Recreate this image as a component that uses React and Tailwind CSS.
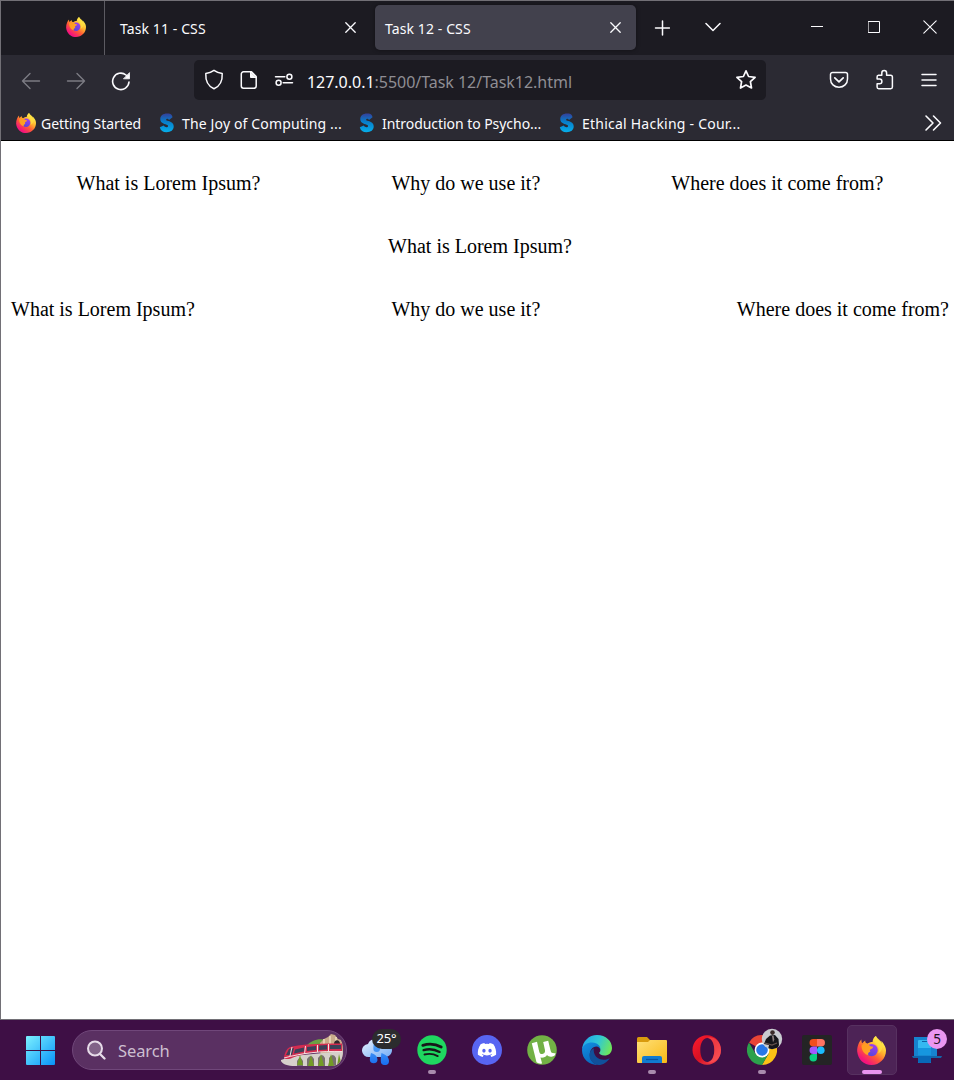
import React from "react";
import { FaDiscord } from "react-icons/fa";

const Svg = ({ w = 20, h, className = "", children, box }) => (
  <svg
    width={w}
    height={h || w}
    viewBox={box || `0 0 ${w} ${h || w}`}
    className={`shrink-0 ${className}`}
    fill="none"
    stroke="#fbfbfe"
    strokeWidth="1.5"
    strokeLinecap="round"
    strokeLinejoin="round"
  >
    {children}
  </svg>
);

function Firefox({ size, id, className = "" }) {
  return (
    <svg width={size} height={size} viewBox="0 0 30 30" className={`shrink-0 ${className}`}>
      <defs>
        <linearGradient id={`${id}a`} x1="0.85" y1="0.1" x2="0.2" y2="0.95">
          <stop offset="0.05" stopColor="#fff44f" />
          <stop offset="0.35" stopColor="#ffb32c" />
          <stop offset="0.6" stopColor="#ff5a36" />
          <stop offset="0.9" stopColor="#f4147c" />
        </linearGradient>
        <linearGradient id={`${id}b`} x1="0.8" y1="0" x2="0.3" y2="1">
          <stop offset="0" stopColor="#a33df0" />
          <stop offset="1" stopColor="#5547d8" />
        </linearGradient>
        <linearGradient id={`${id}c`} x1="0" y1="0" x2="1" y2="1">
          <stop offset="0" stopColor="#ff9a20" />
          <stop offset="1" stopColor="#ffa425" />
        </linearGradient>
      </defs>
      <path d="M28 9c-.8-1.800-2-3-3-3.700.6 1.200.9 2.200 1 3C24.500 4.700 21.300 4 19.500 0c-2.500 1.600-3.300 4.300-3.400 6.100-2 0-4 .7-5.400 1.800C8.500 7.300 8.400 5.400 8.600 4.600 7.200 5.300 6 6.800 5.400 7.500 4.600 6.500 4.500 4.500 4.600 3.600 2.500 5.300 0 10.300.2 16 1 24 7 30 15 30c8.300 0 15-6.500 15-15 0-2.200-.9-4.500-2-6z" fill={`url(#${id}a)`} />
      <path d="M19.500 0c-2.200 2-2.300 5.500 0 8 3 2.800 4 6 2.500 10 4-2 5.500-7 3.500-11.500C24 4 21 3 19.500 0z" fill="#ffdf42" opacity=".75" />
      <circle cx="15.200" cy="14.600" r="6.300" fill={`url(#${id}b)`} />
      <path d="M4.600 10c1.600-2.300 4.100-2.600 6.100-2.100 1.200.3 2.100 1.300 2.500 2.300.8.900 3.500.6 3.500 1.200-.2 1.600-2.600 2-3.200 2.700-.4.800-.1 1.600.6 2.300-1.800 0-3.200 1.400-2.400 3.300C8 19.200 5 15.500 4.600 10z" fill={`url(#${id}c)`} />
    </svg>
  );
}

function Bookmark({ label, className }) {
  return (
    <div className={`flex h-full shrink-0 items-center ${className}`}>
      <svg width="16" height="20" viewBox="0 0 16 20" className="mt-px shrink-0">
        <defs>
          <linearGradient id="swayam" x1="0" y1="0" x2="0" y2="1">
            <stop offset="0" stopColor="#34409b" />
            <stop offset=".4" stopColor="#087bc8" />
            <stop offset="1" stopColor="#06aeea" />
          </linearGradient>
        </defs>
        <path d="M13.500 4.300C13 1 10.500.600 8 .600 4 .600 1.300 2.800 1.300 6c0 3.300 2.400 4.400 5.200 5.300 1.900.6 2.600 1 2.500 1.900-.2 1.500-3 1.500-4.300-.6L.800 14.200C1.500 17.500 4 19.200 7.500 19.200c4.300 0 7.200-2.200 7.200-5.700 0-3.400-2.600-4.600-5.300-5.500C7.800 7.500 7 7.100 7.100 6.400c.2-1.200 2.200-1 2.900.6z" fill="url(#swayam)" />
      </svg>
      <span className="mt-[2px] ml-[7px] whitespace-nowrap">{label}</span>
    </div>
  );
}

function TabBar() {
  return (
    <div className="flex h-[54px] shrink-0 items-center bg-[#1c1b22] text-[14px] tracking-[0.1px]">
      <div className="flex h-full w-[104px] shrink-0 items-center border-r border-[#5c5b62] pl-[65px]">
        <Firefox size={20} id="pin" className="-mt-[2px]" />
      </div>
      <div className="flex h-full w-[270px] shrink-0 items-center justify-between pr-[19px] pl-[15px]">
        <span>Task 11 - CSS</span>
        <Svg w={11} className="-mt-px"><path d="M.8.8l9.400 9.400M10.200.8.800 10.200" strokeWidth="1.300" /></Svg>
      </div>
      <div className="mb-px flex h-[45px] w-[261px] shrink-0 items-center justify-between rounded-[5px] bg-[#42414d] pr-[15px] pl-[10px] shadow-[0_0_4px_rgba(0,0,0,0.4)]">
        <span className="mt-px">Task 12 - CSS</span>
        <Svg w={11}><path d="M.8.8l9.400 9.400M10.200.8.800 10.200" strokeWidth="1.300" /></Svg>
      </div>
      <Svg w={16} className="ml-[18px]"><path d="M8.500 1v14M1.500 8h14" /></Svg>
      <Svg w={16} className="-mt-[2px] ml-[35px]"><path d="M1 4.500l7 7 7-7" /></Svg>
      <Svg w={12} className="-mt-[4px] ml-[90px]"><path d="M0 6.500h12" strokeWidth="1" strokeLinecap="butt" /></Svg>
      <Svg w={12} className="-mt-[2px] ml-[45px]"><path d="M.5.5h11v11H.5z" strokeWidth="1" strokeLinejoin="miter" /></Svg>
      <Svg w={14} className="-mt-[2px] ml-[43px]"><path d="M.8.8l12.400 12.400M13.200.8.800 13.200" strokeWidth="1.100" /></Svg>
    </div>
  );
}

function NavBar() {
  return (
    <div className="flex h-[50px] shrink-0 items-center">
      <Svg w={20} className="mt-px ml-[20px]"><path d="M18.500 10h-17M9 2.500 1.500 10 9 17.500" stroke="#7c7b83" strokeWidth="1.400" /></Svg>
      <Svg w={20} className="mt-px ml-[25px]"><path d="M1.500 10h17M11 2.500l7.500 7.500-7.500 7.500" stroke="#7c7b83" strokeWidth="1.400" /></Svg>
      <Svg w={20} className="mt-[2px] ml-[25px]">
        <path d="M18 11A8.200 8.200 0 1 1 15 4l2 2" strokeWidth="1.600" />
        <path d="M18.500 2v5.800h-5.700z" fill="#fbfbfe" strokeWidth=".8" />
      </Svg>
      <div className="ml-[63px] flex h-[40px] w-[572px] shrink-0 items-center rounded-[5px] bg-[#1c1b22]">
        <Svg w={20} h={22} className="ml-[10px]"><path d="M10 1.300c2.500 1.700 5 2.700 8.200 3.300.4 7-2.200 12.500-8.200 15.200C4 17.100 1.400 11.600 1.800 4.600 5 4 7.500 3 10 1.300z" strokeWidth="1.500" /></Svg>
        <Svg w={18} h={20} className="ml-[16px]">
          <path d="M3.500 1.800h8l4.700 4.700V16a2.200 2.200 0 0 1-2.200 2.200H3.500A2.200 2.200 0 0 1 1.300 16V4a2.200 2.200 0 0 1 2.200-2.200z" />
          <path d="M10.500 2v5.500H16z" fill="#fbfbfe" strokeWidth="1" />
        </Svg>
        <Svg w={20} h={14} className="ml-[16px]">
          <path d="M1.500 3.800h9.300M9.200 9.800h9.300" />
          <circle cx="15.400" cy="3.800" r="2.500" /><circle cx="4.600" cy="9.800" r="2.500" />
        </Svg>
        <span className="mt-[3px] ml-[13px] w-[428px] text-[16px] tracking-[-0.03px] whitespace-nowrap text-[#8f8e94]">
          <span className="text-[#fbfbfe]">127.0.0.1</span>:5500/Task 12/Task12.html
        </span>
        <Svg w={22}><path d="M11 1.800l2.600 5.700 6.500.8-4.700 4.300 1.100 6.400-5.500-3-5.500 3 1.100-6.400L1.900 8.300l6.500-.8z" strokeWidth="1.700" /></Svg>
      </div>
      <Svg w={20} className="ml-[63px]">
        <path d="M3.500 2.500h13a2 2 0 0 1 2 2V9c0 4.800-3.700 8.200-8.500 8.200S1.500 13.800 1.500 9V4.500a2 2 0 0 1 2-2z" />
        <path d="M5.800 7.800 10 11.900l4.200-4.100" strokeWidth="1.700" />
      </Svg>
      <Svg w={20} h={22} className="ml-[26px]">
        <path d="M3.500 6.300h3.300V3.900a2.400 2.400 0 0 1 4.800 0v2.400h4a1.800 1.800 0 0 1 1.800 1.800v10a1.600 1.600 0 0 1-1.600 1.600H3.700a1.600 1.600 0 0 1-1.600-1.600v-3.400h2.500a2.300 2.300 0 0 0 0-4.600H2.100V8a1.600 1.600 0 0 1 1.400-1.700z" />
      </Svg>
      <Svg w={18} h={14} className="-mt-px ml-[25px]"><path d="M2 1.500h14M2 7h14M2 12.500h14" /></Svg>
    </div>
  );
}

function BrowserPage() {
  return (
    <main className="flex flex-1 flex-col border-t border-black bg-white px-[5px] pt-[26px] font-['Liberation_Serif',serif] text-[20px] leading-[33px] text-black">
      <div className="flex justify-around pl-[5px]">
        <span>What is Lorem Ipsum?</span>
        <span>Why do we use it?</span>
        <span>Where does it come from?</span>
      </div>
      <div className="mt-[30px] flex justify-center pl-[5px]"><span>What is Lorem Ipsum?</span></div>
      <div className="mt-[30px] flex justify-between pl-[5px]">
        <span>What is Lorem Ipsum?</span>
        <span>Why do we use it?</span>
        <span>Where does it come from?</span>
      </div>
    </main>
  );
}

function Slot({ children, dot }) {
  return (
    <div className="relative flex h-full w-[55px] shrink-0 items-center justify-center">
      {children}
      {dot && <span className="absolute bottom-[6px] left-[24px] h-[4px] w-[8px] rounded-full bg-[#a98bad]" />}
    </div>
  );
}

const App30 = ({ children }) => (
  <svg width="30" height="30" viewBox="0 0 30 30" className="shrink-0">{children}</svg>
);

function Train() {
  return (
    <svg width="62" height="34" viewBox="0 0 62 34">
      <defs><clipPath id="train"><path d="M0 0h50c8 0 12 7 12 17s-4 16-12 16H14C7 33 1 31 0 28z" /></clipPath></defs>
      <g clipPath="url(#train)">
        <path d="M25 13c6-6 12-8 21-6v8z" fill="#6ba144" />
        <path d="M39 10l4-4 4-2 3-3 4 1 3 4 3 1 2 4v21H40z" fill="#c9ac8b" />
        <path d="M43 6v7M49 3v9M55 4v7" stroke="#e4d0b2" strokeWidth="2" />
        <path d="M53 11c0-5 6-5 6 0v4h-6z" fill="#30272c" />
        <path d="M0 27l12-4 50-5v15H0z" fill="#d6d0cb" />
        <path d="M16 33v-5q3-6 6 0v5zM26 33v-7q4-6 7 0v7zM37 33v-8q4-6 7 0v8zM48 33v-8q4-6 7 0v8z" fill="#78716f" />
        <path d="M19 22l-3 10h6zM30 22l-3 11h6zM40 21l-3 12h6zM50 21l-3 12h6zM58 21l-2 12h5z" fill="#739b27" />
        <path d="M3 24.500c1-6 3-10 8-11 16-3 32-3 50-3v7.500c-20 0-36 1.500-49 6.500-4 2-8 2-9 0z" fill="#d32c50" />
        <path d="M5 22l3-6 5-1-2 7zM14 16.500l9-2v4l-10 2zM26 14l9-1v4l-9 1zM38 12.500l8-.5v4.500l-8 .5zM49 12h11v4H49z" fill="#3c4058" />
        <path d="M3 25c18-5 37-7 58-6.500" stroke="#f3dfe0" fill="none" />
        <path d="M11 14l-2 9M24.500 13l-1 8M36.500 12v7M47.500 11v7" stroke="#f2e4e4" strokeWidth="1" />
      </g>
    </svg>
  );
}

function Taskbar() {
  return (
    <footer className="flex h-[60px] shrink-0 items-center bg-[#3e0f45] font-['Noto_Sans',sans-serif]">
      <svg width="30" height="30" viewBox="0 0 30 30" className="ml-[25px] shrink-0">
        <defs><linearGradient id="win" gradientUnits="userSpaceOnUse" x1="0" y1="0" x2="30" y2="30"><stop stopColor="#80f4ff" /><stop offset="1" stopColor="#0893f8" /></linearGradient></defs>
        <path d="M2 1h13v14H1V2a1 1 0 0 1 1-1zM16 1h13a1 1 0 0 1 1 1v13H16zM1 16h14v14H2a1 1 0 0 1-1-1zM16 16h14v13a1 1 0 0 1-1 1H16z" fill="url(#win)" />
      </svg>
      <div className="ml-[17px] flex h-[40px] w-[275px] shrink-0 items-center rounded-full border border-[#70477a] bg-[#5a3062] pr-[3px]">
        <Svg w={20} className="ml-[13px]"><circle cx="9" cy="8.500" r="7" stroke="#e7dce9" strokeWidth="2" fill="#816288" /><path d="M14 14l4.500 4.500" stroke="#e7dce9" strokeWidth="2.300" /></Svg>
        <span className="mt-[2px] ml-[12px] flex-1 text-[16.500px] tracking-[-0.1px] text-[#cdbfd0]">Search</span>
        <Train />
      </div>
      <div className="ml-[2px] flex h-full shrink-0">
        <Slot>
          <svg width="30" height="30" viewBox="0 0 30 30">
            <defs><linearGradient id="cloud" x1="0" y1="0" x2="1" y2="1"><stop stopColor="#e8f2ff" /><stop offset="1" stopColor="#75adf5" /></linearGradient><linearGradient id="drop" x1="0" y1="0" x2="0" y2="1"><stop stopColor="#58a9fa" /><stop offset="1" stopColor="#176df0" /></linearGradient></defs>
            <path d="M7 22a6.500 6.500 0 0 1-1-13C8 3 17 2 20 8c6-1 10 2 10 7 0 4-3 7-7 7z" fill="url(#cloud)" />
            <path d="M9 18c4 1 6.500 3.500 6.500 7a3.900 3.900 0 0 1-7.700 0c0-2 .5-4 1.200-7zM19.500 18c4.500 1.500 7.500 4.500 7.500 8a4.100 4.100 0 0 1-8.200 0c0-2.500 0-4.500.7-8zM12 7c3.500 1 6 3.500 6 6.700a3.300 3.300 0 0 1-6.600 0c0-2 0-4 .6-6.700z" fill="url(#drop)" />
          </svg>
          <span className="absolute top-[9px] left-[23px] flex h-[20px] w-[29px] items-center justify-center rounded-full bg-[#2c2c2e] text-[13px] tracking-[-0.2px] text-white">25°</span>
        </Slot>
        <Slot dot>
          <App30><circle cx="15" cy="15" r="14.700" fill="#1fd760" /><g stroke="#171719" fill="none" strokeLinecap="round"><path d="M5.800 10.300c6-1.800 13-1.200 18.400 1.700" strokeWidth="2.800" /><path d="M6.600 15.100c5.500-1.600 11-.9 16 1.800" strokeWidth="2.300" /><path d="M7.500 19.500c4.700-1.200 9.200-.7 13.200 1.600" strokeWidth="1.900" /></g></App30>
        </Slot>
        <Slot>
          <span className="flex h-[30px] w-[30px] items-center justify-center rounded-full bg-[#5865f2]"><FaDiscord size={20} color="white" /></span>
        </Slot>
        <Slot>
          <App30>
            <circle cx="15" cy="15" r="14.800" fill="#72b145" />
            <path d="M4.800 8.300l5.200-1.600 2.200 9.800c.6 2.300 2 3 3.800 2.300 1.800-.8 2.400-2 1.900-4.100L16.200 7l5-1.200 2.500 10.300c.4 1.700 1.600 2.500 4.900 2.200-.4 2-1.400 3.200-4.100 3.400-2 .2-3.400-.5-4.500-1.700-1.200 2-3.600 3-6.500 2.600l1.600 6c-2.200.3-4.200-.2-5.600-1.300z" fill="#fff" />
          </App30>
        </Slot>
        <Slot>
          <App30>
            <defs>
              <linearGradient id="edgeA" x1="0" y1=".3" x2="1" y2=".6"><stop stopColor="#22a6e8" /><stop offset=".5" stopColor="#30c7d6" /><stop offset="1" stopColor="#70e858" /></linearGradient>
              <linearGradient id="edgeB" x1="0" y1="0" x2=".5" y2="1"><stop stopColor="#1390e2" /><stop offset="1" stopColor="#0866bc" /></linearGradient>
            </defs>
            <path d="M0 15C.5 6 7 0 15 0c9 0 15 6 15 13 0 5-3.500 7.500-7.500 7.500-3.500 0-5.300-1.400-5.300-2.400 0-.6 1.200-1.200 1.200-3 0-3-3-6-8-6C5 9.100 1 11.500 0 15z" fill="url(#edgeA)" />
            <path d="M0 15c.5-5 5-7.500 10-7.500 6 0 8.800 4 8.400 7.500-.4-2-2-3.500-4-3.500-4 0-7 4-6.500 9.500.4 4.500 3.800 8 8.600 9C7 30 0 24 0 15z" fill="url(#edgeB)" />
            <path d="M11.800 13.300c-1 7 4 11.500 10 11.500 2.500 0 4.500-1 6-1.900C25.500 27 21 30 16.500 30 11 29 7.500 25 7.500 20.500c0-3.500 1.800-6 4.300-7.200z" fill="#10519b" />
          </App30>
        </Slot>
        <Slot dot>
          <App30>
            <defs><linearGradient id="folder" x1="0" y1="0" x2="1" y2="1"><stop stopColor="#ffe078" /><stop offset="1" stopColor="#f8b915" /></linearGradient></defs>
            <path d="M0 3.500A1.500 1.500 0 0 1 1.500 2H10l3 3h15v10H0z" fill="#d99b0d" />
            <path d="M0 7h11l2-2h16a1 1 0 0 1 1 1v21a1 1 0 0 1-1 1H1a1 1 0 0 1-1-1z" fill="url(#folder)" />
            <path d="M5 28v-5a2 2 0 0 1 2-2h16a2 2 0 0 1 2 2v5z" fill="#117bd0" /><path d="M9 24.500h12" stroke="#0754a2" strokeWidth="1.200" />
          </App30>
        </Slot>
        <Slot>
          <App30>
            <defs><linearGradient id="opera" x1="0" y1="0" x2="1" y2="1"><stop stopColor="#ff1b2d" /><stop offset=".5" stopColor="#d51124" /><stop offset="1" stopColor="#ff5053" /></linearGradient></defs>
            <path fillRule="evenodd" d="M15 .3c8 0 14 6.500 14 14.700s-6 14.700-14 14.700S.5 23 .5 15 7 .3 15 .3zM15.500 3C11 3 8.300 8 8.300 15s2.700 12 7.200 12c4 0 6.800-5 6.800-12S19.500 3 15.500 3z" fill="url(#opera)" />
            <path d="M15.500 3c4-2.500 13.500 2 13.500 12s-9.500 14.500-13.500 12c4 0 6.800-5 6.800-12S19.500 3 15.500 3z" fill="#ff5b5c" opacity=".55" />
          </App30>
        </Slot>
        <Slot dot>
          <App30>
            <path d="M15 15 2 7.500a15 15 0 0 1 26 0z" fill="#e84436" />
            <path d="M15 7.500h13A15 15 0 0 1 15 30l6.500-11.300z" fill="#fbc116" />
            <path d="M2 7.500A15 15 0 0 0 15 30l6.500-11.300H8.500z" fill="#2ca14c" />
            <circle cx="15" cy="15" r="7.400" fill="#fff" /><circle cx="15" cy="15" r="5.800" fill="#2878e8" />
          </App30>
          <svg width="22" height="22" viewBox="0 0 22 22" className="absolute top-[8px] left-[27px]">
            <defs><clipPath id="avatar"><circle cx="11" cy="11" r="10.200" /></clipPath></defs>
            <g clipPath="url(#avatar)"><path d="M0 0h22v22H0z" fill="#c9cbd0" /><path d="M3 16l2-5 4-3.500 5-.5 3.500 4 .5 6-2 5H7l1-5z" fill="#15161a" /><circle cx="11.500" cy="4.600" r="2.300" fill="#3a2b29" /><path d="M11 8l1.500-.5.8 4-1.300 3z" fill="#8f8180" /><path d="M4 15l7 2 5-2" stroke="#66544f" strokeWidth="1.300" fill="none" /></g>
          </svg>
        </Slot>
        <Slot>
          <App30>
            <rect width="30" height="30" rx="2" fill="#242425" />
            <path d="M11.300 4H15v7.500h-3.700a3.750 3.750 0 0 1 0-7.500z" fill="#f24e1e" /><path d="M15 4h4.200a3.750 3.750 0 0 1 0 7.500H15z" fill="#ff7262" />
            <path d="M11.300 11.500H15V19h-3.700a3.750 3.750 0 0 1 0-7.500z" fill="#a259ff" /><circle cx="18.800" cy="15.200" r="3.800" fill="#1abcfe" />
            <path d="M11.300 19H15v3.500a3.750 3.750 0 1 1-3.700-3.500z" fill="#0acf83" />
          </App30>
        </Slot>
        <Slot>
          <span className="flex h-[50px] w-[50px] items-center justify-center rounded-[5px] border border-[#573160] bg-[#4d2356]"><Firefox size={29} id="task" /></span>
          <span className="absolute bottom-[6px] left-[18px] h-[4px] w-[20px] rounded-full bg-[#e994ef]" />
        </Slot>
        <Slot>
          <App30>
            <path d="M2 2h23v19H2z" fill="#1683cf" /><path d="M0 21h30c-.5 1.500-1 2-2 2H2c-1 0-1.500-.5-2-2z" fill="#1265aa" />
            <path d="M6 6a1 1 0 0 1 1-1h11a1 1 0 0 1 1 1v21a1 1 0 0 1-1 1H7a1 1 0 0 1-1-1z" fill="#35b9f1" /><path d="M6 13h13v7.500H6z" fill="#1696df" /><path d="M6 20.500h13V27a1 1 0 0 1-1 1H7a1 1 0 0 1-1-1z" fill="#0868b7" /><path d="M10 6.500h5" stroke="#0e62a5" />
          </App30>
          <span className="absolute top-[9px] left-[28px] flex h-[20px] w-[20px] items-center justify-center rounded-full bg-[#ea96f1] text-[13.500px] text-[#1c101e]">5</span>
        </Slot>
      </div>
    </footer>
  );
}

export default function App() {
  return (
    <div className="flex h-[1080px] w-[954px] flex-col overflow-hidden">
      <div className="flex h-[1020px] shrink-0 flex-col border-t border-b border-l border-[#727076] bg-[#2b2a33] font-['Noto_Sans',sans-serif] text-[#fbfbfe]">
        <TabBar />
        <NavBar />
        <div className="flex h-[35px] shrink-0 items-center text-[14px]">
          <Firefox size={20} id="start" className="ml-[15px]" />
          <span className="mt-[2px] ml-[5px] w-[118px] tracking-[-0.03px] whitespace-nowrap">Getting Started</span>
          <Bookmark label="The Joy of Computing ..." className="w-[200px] tracking-[0.15px]" />
          <Bookmark label="Introduction to Psycho..." className="w-[200px] tracking-[-0.05px]" />
          <Bookmark label="Ethical Hacking - Cour..." className="w-[365px] tracking-[0.23px]" />
          <Svg w={18}><path d="M2 2l7 7-7 7M9.500 2l7 7-7 7" strokeWidth="1.600" /></Svg>
        </div>
        <BrowserPage />
      </div>
      <Taskbar />
    </div>
  );
}
